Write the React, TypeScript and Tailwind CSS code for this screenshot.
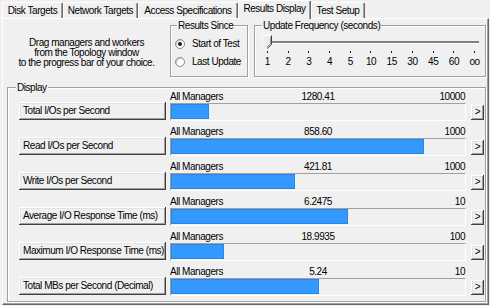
import React from "react";

const rows = [
  { name: "Total I/Os per Second", value: "1280.41", max: "10000", fill: 38 },
  { name: "Read I/Os per Second", value: "858.60", max: "1000", fill: 253 },
  { name: "Write I/Os per Second", value: "421.81", max: "1000", fill: 124 },
  { name: "Average I/O Response Time (ms)", value: "6.2475", max: "10", fill: 177 },
  { name: "Maximum I/O Response Time (ms)", value: "18.9935", max: "100", fill: 53 },
  { name: "Total MBs per Second (Decimal)", value: "5.24", max: "10", fill: 148 },
];

const ticks = ["1", "2", "3", "4", "5", "10", "15", "30", "45", "60", "oo"];

const raised =
  "shadow-[inset_-1px_-1px_0_#404040,inset_1px_1px_0_#ffffff,inset_-2px_-2px_0_#a0a0a0,inset_2px_2px_0_#e3e3e3]";

function Group({
  label,
  left,
  className,
  children,
}: {
  label: string;
  left: string;
  className: string;
  children?: React.ReactNode;
}) {
  return (
    <div
      className={`relative border border-[#a0a0a0] shadow-[inset_1px_1px_0_#ffffff,1px_1px_0_#ffffff] ${className}`}
    >
      <span className={`absolute -top-[6px] ${left} px-[1px] bg-[#f0f0f0] leading-[11px] whitespace-nowrap`}>
        {label}
      </span>
      {children}
    </div>
  );
}

function Radio({ checked }: { checked?: boolean }) {
  return (
    <span className="w-[10px] h-[10px] rounded-full bg-white border border-[#8a8a8a] shadow-[inset_1px_1px_0_#c8c8c8] flex items-center justify-center">
      {checked && <span className="w-[4px] h-[4px] rounded-full bg-[#1a1a1a]" />}
    </span>
  );
}

function Tab({ label, w, active }: { label: string; w: string; active?: boolean }) {
  return (
    <div
      className={`${w} flex justify-center rounded-t-[2px] border-t border-l border-white border-r border-r-[#696969] shadow-[inset_-1px_0_0_#a0a0a0] ${
        active
          ? "h-[19px] -mb-px relative z-10 bg-[#f0f0f0] pt-[3px]"
          : "h-[16px] pt-[3px]"
      }`}
    >
      <span className="leading-[10px] whitespace-nowrap">{label}</span>
    </div>
  );
}

function Thumb() {
  return (
    <svg width="10" height="14" viewBox="0 0 10 14" className="absolute left-[7px] top-[9px]">
      <path d="M0.5 0.5H9.5V9.5L5 13.5L0.5 9.5Z" fill="#ececec" />
      <path d="M0.5 9.5V0.5H9" fill="none" stroke="#ffffff" />
      <path d="M9.5 0.5V9.5L5 13.5" fill="none" stroke="#404040" />
      <path d="M8.5 1.5V9L5 12" fill="none" stroke="#a0a0a0" />
    </svg>
  );
}

export default function App() {
  return (
    <div className="w-[490px] h-[306px] bg-[#f0f0f0] overflow-hidden text-[10px] leading-none text-black tracking-[-0.45px] font-['Liberation_Sans',Arial,sans-serif]">
      {/* tabs */}
      <div className="flex items-end h-[18px] pl-[2px]">
        <Tab label="Disk Targets" w="w-[61px]" />
        <Tab label="Network Targets" w="w-[75px]" />
        <Tab label="Access Specifications" w="w-[100px]" />
        <Tab label="Results Display" w="w-[73px]" active />
        <Tab label="Test Setup" w="w-[54px]" />
      </div>

      <div className="ml-[2px] w-[487px] h-[287px] border border-t-white border-l-white border-r-[#696969] border-b-[#696969] shadow-[inset_-1px_-1px_0_#a0a0a0]">
        {/* top section */}
        <div className="flex mt-[6px] h-[52px]">
          <div className="w-[167px] pt-[13px] flex flex-col items-center leading-[10px]">
            <p>Drag managers and workers</p>
            <p>from the Topology window</p>
            <p>to the progress bar of your choice.</p>
          </div>

          <Group label="Results Since" left="left-[6px]" className="w-[78px] h-[52px]">
            <div className="flex flex-col gap-[8px] pt-[13px] pl-[4px]">
              <div className="flex items-center gap-[7px] h-[10px]">
                <Radio checked />
                <span>Start of Test</span>
              </div>
              <div className="flex items-center gap-[7px] h-[10px]">
                <Radio />
                <span>Last Update</span>
              </div>
            </div>
          </Group>

          <Group
            label="Update Frequency (seconds)"
            left="left-[7px]"
            className="ml-[6px] w-[232px] h-[52px]"
          >
            <Thumb />
            <div className="mt-[15px] ml-[12px] w-[212px] h-[3px] border-t-2 border-[#808080] border-b border-b-white" />
            <div className="ml-[2px] w-[228px] mt-[7px] grid grid-cols-11">
              {ticks.map((t) => (
                <div key={t} className="flex justify-center">
                  <span className="w-[1px] h-[2px] bg-[#202020]" />
                </div>
              ))}
            </div>
            <div className="ml-[2px] w-[228px] mt-[4px] grid grid-cols-11 leading-[10px]">
              {ticks.map((t) => (
                <div key={t} className="text-center">
                  {t}
                </div>
              ))}
            </div>
          </Group>
        </div>

        {/* display */}
        <Group label="Display" left="left-[8px]" className="ml-[4px] mt-[10px] w-[479px] h-[215px]">
          <div className="flex flex-col gap-[6px] pt-[4px] pl-[11px]">
            {rows.map((r) => (
              <div key={r.name} className="flex flex-col">
                <div className="ml-[151px] w-[296px] h-[11px] grid grid-cols-[1fr_auto_1fr] leading-[10px]">
                  <span className="justify-self-start">All Managers</span>
                  <span>{r.value}</span>
                  <span className="justify-self-end pr-px">{r.max}</span>
                </div>
                <div className="flex items-start h-[18px]">
                  <div
                    className={`w-[147px] h-[18px] -mt-px pl-[4px] flex items-center bg-[#f0f0f0] whitespace-nowrap ${raised}`}
                  >
                    <span>{r.name}</span>
                  </div>
                  <div className="ml-[4px] w-[296px] h-[18px] border border-t-[#a0a0a0] border-l-[#a0a0a0] border-r-white border-b-white pb-px">
                    <div
                      className="h-full bg-[#3399ff] border border-[#2a86e4]"
                      style={{ width: r.fill }}
                    />
                  </div>
                  <div
                    className={`ml-[5px] mt-[2px] w-[13px] h-[15px] flex items-center justify-center bg-[#f0f0f0] ${raised}`}
                  >
                    <span className="-mt-px">&gt;</span>
                  </div>
                </div>
              </div>
            ))}
          </div>
        </Group>
      </div>
    </div>
  );
}
